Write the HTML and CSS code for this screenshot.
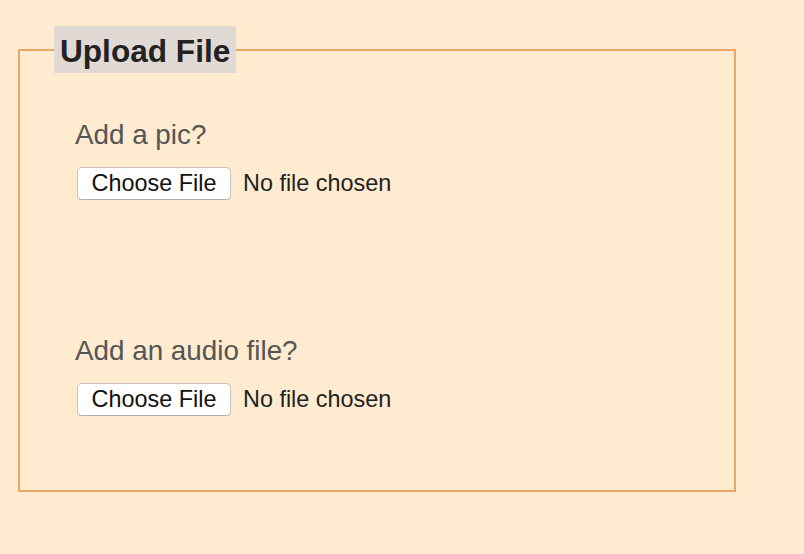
FILE: index.html
```html
<!DOCTYPE html>
<html>
<head>
<meta charset="utf-8">
<link rel="stylesheet" href="styles.css">
</head>
<body>
<form class="form">
  <fieldset class="box">
    <legend class="box-title">Upload File</legend>
    <div class="field">
      <label class="field-label" for="pic">Add a pic?</label>
      <input class="file" id="pic" type="file">
    </div>
    <div class="field field-second">
      <label class="field-label" for="audio">Add an audio file?</label>
      <input class="file" id="audio" type="file">
    </div>
  </fieldset>
</form>
</body>
</html>
```
FILE: styles.css
```css
html, body {
  background: #ffebcf;
}
body {
  margin: 8px;
  font-family: "Liberation Sans", Arial, sans-serif;
}
.form {
  margin: 0;
}
.box {
  margin: 18px 60px 0 10px;
  border: 2px solid #eda566;
  padding: 46px 20px 74px 34px;
  min-width: 0;
}
.box-title {
  background: #e1d9d3;
  color: #222;
  font-weight: bold;
  font-size: 31.6px;
  line-height: 37px;
  padding: 7px 6px 3px;
}
.field {
  padding-left: 21px;
  display: flex;
  flex-direction: column;
  align-items: flex-start;
}
.field-second {
  margin-top: 135px;
}
.field-label {
  font-size: 27.8px;
  line-height: 31px;
  color: #555;
  margin-bottom: 17px;
}
.file {
  font-family: "Liberation Sans", Arial, sans-serif;
  font-size: 23.4px;
  color: #222;
  margin: 0 0 0 2px;
  height: 33px;
}
.file::file-selector-button {
  font-family: "Liberation Sans", Arial, sans-serif;
  font-size: 23.4px;
  color: #111;
  background: #fff;
  border: 1px solid #c9c2bb;
  border-bottom-color: #b5aca4;
  border-radius: 5px;
  height: 33px;
  width: 154px;
  padding: 0;
  margin: 0 12px 0 0;
  box-shadow: 0 1px 1px rgba(0,0,0,0.08);
}
```
